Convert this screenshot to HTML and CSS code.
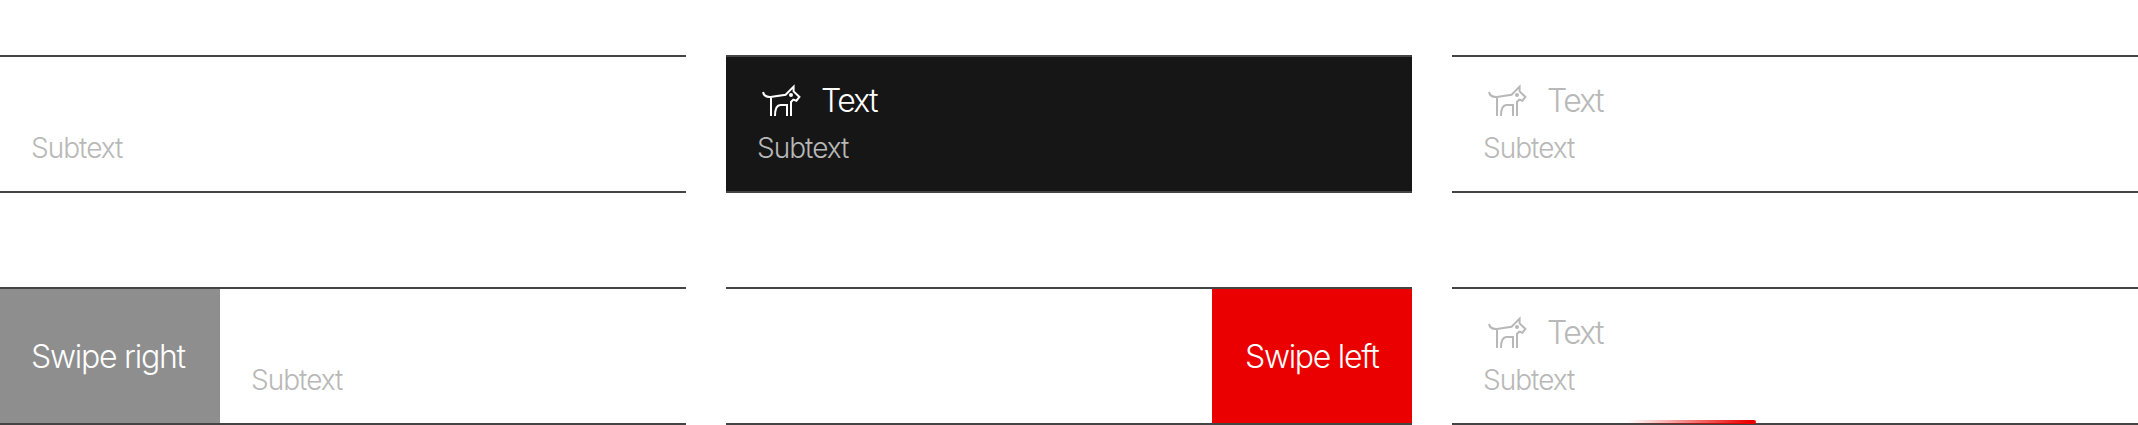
FILE: index.html
```
<!DOCTYPE html>
<html lang="en">
<head>
<meta charset="utf-8">
<title>List items</title>
<link rel="stylesheet" href="styles.css">
</head>
<body>
<svg class="defs" aria-hidden="true">
  <symbol id="dog" viewBox="0 0 48 48">
    <path d="M5.1 16C5.6 19.4 8.4 21.1 12.5 20.9L27.6 18.8L35.6 10.6V15.4L41.4 20.9L38.4 24.7L35.3 23.6L33 26V40M13 20.9V40M17 40C17 33 18.2 29 22.5 29H29V40" fill="none" stroke="currentColor" stroke-width="2"/>
    <circle cx="33" cy="19" r="2" fill="currentColor"/>
  </symbol>
</svg>
<main class="grid">
  <section class="item">
    <div class="content"><p class="title"></p><p class="subtext">Subtext</p></div>
  </section>
  <section class="item item--active">
    <div class="content"><p class="title"><svg class="icon"><use href="#dog"/></svg><span class="label">Text</span></p><p class="subtext">Subtext</p></div>
  </section>
  <section class="item">
    <div class="content"><p class="title"><svg class="icon"><use href="#dog"/></svg><span class="label">Text</span></p><p class="subtext">Subtext</p></div>
  </section>
  <section class="item">
    <div class="swipe swipe--right"><span class="right-label">Swipe right</span></div>
    <div class="content"><p class="title"></p><p class="subtext">Subtext</p></div>
  </section>
  <section class="item item--end">
    <div class="swipe swipe--left"><span class="left-label">Swipe left</span></div>
  </section>
  <section class="item">
    <div class="content"><p class="title"><svg class="icon"><use href="#dog"/></svg><span class="label">Text</span></p><p class="subtext">Subtext</p></div>
    <span class="progress"></span>
  </section>
</main>
</body>
</html>
```
FILE: styles.css
```
* { box-sizing: border-box; }
body {
  margin: 0;
  background: #fff;
  color: #b8b8b8;
  font-family: Inter, "Liberation Sans", sans-serif;
  font-weight: 300;
}
p { margin: 0; }
.defs { display: none; }
.grid {
  display: grid;
  grid-template-columns: repeat(3, 686px);
  gap: 94px 40px;
  padding-top: 55px;
}
.item {
  position: relative;
  display: flex;
  height: 138px;
  border-top: 2px solid #444;
  border-bottom: 2px solid #444;
}
.item--active { background: #161616; }
.item--active .title { color: #fff; }
.item--end { justify-content: flex-end; }
.content { padding: 19px 31px 0; }
.title {
  display: flex;
  align-items: center;
  gap: 15px;
  height: 48px;
  font-size: 32px;
  line-height: 48px;
  white-space: nowrap;
}
.icon { width: 48px; height: 48px; margin-left: 1px; }
.label { padding-top: 2px; letter-spacing: -1.7px; }
.subtext {
  font-size: 28px;
  line-height: 48px;
  letter-spacing: -1px;
}
.swipe {
  display: flex;
  align-items: center;
  padding: 2px 31px 0;
  color: #fff;
  font-size: 32px;
  line-height: 48px;
  white-space: nowrap;
}
.swipe--right { width: 220px; background: #8e8e8e; }
.swipe--left { width: 200px; padding-left: 33px; background: #eb0000; }
.right-label { letter-spacing: -1.25px; }
.left-label { letter-spacing: -1.3px; }
.progress {
  position: absolute;
  left: 176px;
  bottom: -1px;
  width: 128px;
  height: 4px;
  border-top-right-radius: 2px;
  border-bottom-right-radius: 2px;
  background: linear-gradient(to right, rgba(235, 0, 0, 0), #eb0000 95%);
}
```
